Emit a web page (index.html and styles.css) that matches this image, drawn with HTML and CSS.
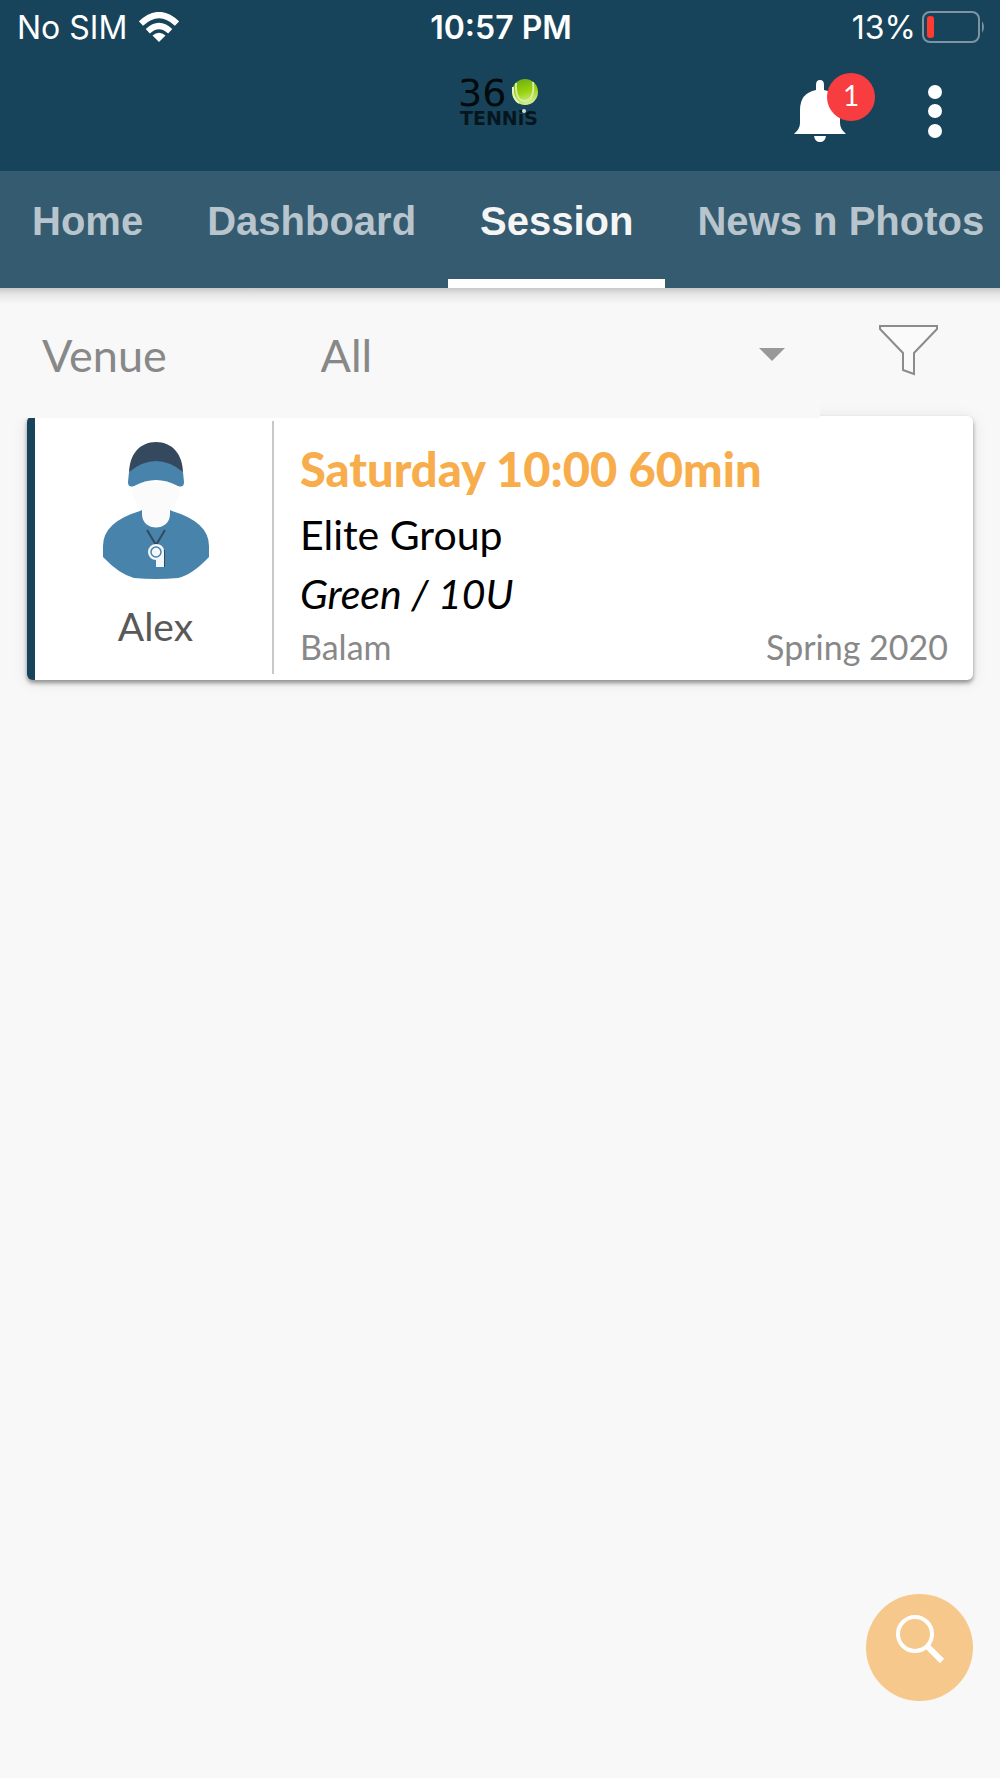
FILE: index.html
```html
<!DOCTYPE html>
<html lang="en">
<head>
<meta charset="utf-8">
<meta name="viewport" content="width=device-width, initial-scale=1">
<title>360 Tennis – Session</title>
<link rel="stylesheet" href="styles.css">
</head>
<body>
<header class="header">
  <div class="status">
    <div class="status-left">
      <span>No SIM</span>
      <svg width="40" height="30" viewBox="0 0 40 30" aria-hidden="true">
        <g fill="none" stroke="#fff" stroke-width="6">
          <path d="M2 11.500Q20-5.500 38 11.500"/>
          <path d="M8.800 19.200Q20 8.800 31.200 19.200"/>
        </g>
        <path d="M13.500 23.500Q20 18 26.500 23.500L20 30Z" fill="#fff"/>
      </svg>
    </div>
    <span class="time">10:57 PM</span>
    <div class="status-right">
      <span>13%</span>
      <svg width="63" height="34" viewBox="0 0 63 34" aria-hidden="true">
        <rect x="1" y="2" width="56" height="30" rx="7" fill="none" stroke="#7d95a3" stroke-width="2"/>
        <rect x="5" y="6" width="7" height="22" rx="3" fill="#ff3b30"/>
        <path d="M60 11Q64 17 60 23Z" fill="#7d95a3"/>
      </svg>
    </div>
  </div>
  <div class="toolbar">
    <svg class="logo" width="86" height="60" viewBox="0 0 86 60" role="img" aria-label="360 Tennis">
      <defs>
        <linearGradient id="ball" x1="0.3" y1="0" x2="0.6" y2="1">
          <stop offset="0" stop-color="#6fae12"/><stop offset="0.5" stop-color="#98d30d"/><stop offset="1" stop-color="#d9f09a"/>
        </linearGradient>
      </defs>
      <text x="1" y="34" class="logo-number">36</text>
      <circle cx="68" cy="20" r="13" fill="url(#ball)"/>
      <path d="M59 11Q58 29 68 29Q78 28 76 10" fill="none" stroke="#d5eda0" stroke-width="2"/>
      <path d="M56 15Q55 26 62 31" fill="none" stroke="#e4f4c0" stroke-width="2"/>
      <text x="3" y="53" class="logo-name">TENNiS</text>
      <circle cx="67" cy="39" r="2" fill="#cfdbe0"/>
    </svg>
    <div class="actions">
      <button class="icon-button bell" type="button" aria-label="Notifications">
        <svg width="52" height="62" viewBox="0 0 52 62" aria-hidden="true">
          <path fill="#fff" d="M22 10V5Q22 0 26 0T30 5V10Q46 13 46 30V43Q46 49 52 54V57H0V54Q6 49 6 43V30Q6 13 22 10Z"/>
          <path fill="#17445b" d="M0 54h52v3H0Z"/>
          <path fill="#fff" d="M20 56H32Q31 62 26 62T20 56Z"/>
        </svg>
        <span class="badge">1</span>
      </button>
      <button class="icon-button" type="button" aria-label="More options">
        <svg width="14" height="54" viewBox="0 0 14 54" fill="#fff" aria-hidden="true">
          <circle cx="7" cy="8" r="7"/><circle cx="7" cy="27" r="7"/><circle cx="7" cy="47" r="7"/>
        </svg>
      </button>
    </div>
  </div>
</header>
<nav class="tabs">
  <a class="tab" href="#home">Home</a>
  <a class="tab" href="#dashboard">Dashboard</a>
  <a class="tab active" href="#session" aria-current="page">Session</a>
  <a class="tab" href="#news">News n Photos</a>
</nav>
<main>
  <form class="filters">
    <div class="venue">
      <label for="venue">Venue</label>
      <span class="select-box">
        <select id="venue"><option>All</option></select>
        <svg width="26" height="13" viewBox="0 0 26 13" aria-hidden="true"><path d="M0 0H26L13 13Z" fill="#999"/></svg>
      </span>
    </div>
    <button class="icon-button funnel" type="button" aria-label="Filter">
      <svg width="60" height="52" viewBox="0 0 60 52" aria-hidden="true">
        <path d="M1 2H58V5L35 29V50L24 46V29L1 5Z" fill="#fafafa" stroke="#8c8c8c" stroke-width="2"/>
      </svg>
    </button>
  </form>
  <article class="card">
    <div class="coach">
      <svg width="108" height="138" viewBox="0 0 108 138" aria-hidden="true">
        <path d="M30 40H78Q79 58 68 69V85H40V69Q29 58 30 40Z" fill="#fbfbfc"/>
        <path d="M27 32C27 12 38 0 54 0S81 12 81 32Z" fill="#34495e"/>
        <path d="M27 30Q54 8 81 30L82 40Q82 46 76 44Q54 32 32 44Q26 46 26 40Z" fill="#4783aa"/>
        <path d="M38 69L40 68V72C40 90 68 90 68 72V68L70 69Q107 80 107 104V115Q90 133 76 136Q54 138 32 136Q17 132 1 115V104Q1 80 38 69Z" fill="#4783aa"/>
        <path d="M45 88L54 103L63 88" fill="none" stroke="#34495e" stroke-width="2"/>
        <path d="M55 108H63V125H55Z" fill="#34495e"/>
        <path d="M54 102A8 8 0 1 0 54 118V125H62V110Q62 102 54 102Z" fill="#f4f7f9"/>
        <circle cx="54" cy="110" r="5" fill="#f4f7f9" stroke="#4783aa" stroke-width="1.500"/>
      </svg>
      <span class="coach-name">Alex</span>
    </div>
    <div class="details">
      <h2>Saturday 10:00 60min</h2>
      <p class="group">Elite Group</p>
      <p class="group level">Green / 10U</p>
      <p class="meta"><span>Balam</span><span>Spring 2020</span></p>
    </div>
  </article>
</main>
<button class="search" type="button" aria-label="Search">
  <svg width="48" height="48" viewBox="0 0 48 48" fill="none" stroke="#fff" aria-hidden="true">
    <circle cx="19" cy="19" r="17" stroke-width="4"/>
    <path d="M31 31L46 46" stroke-width="6"/>
  </svg>
</button>
</body>
</html>
```
FILE: styles.css
```css
* { box-sizing: border-box; }
body {
  margin: 0;
  min-height: 100vh;
  background: #f8f8f8;
  font-family: Lato, "Liberation Sans", sans-serif;
}
h2, p { margin: 0; }
svg { display: block; flex: none; }
button { padding: 0; border: 0; background: none; font: inherit; cursor: pointer; }

.header { background: #17445b; color: #fff; }
.status {
  display: grid;
  grid-template-columns: 1fr auto 1fr;
  align-items: center;
  height: 54px;
  padding: 0 15px 0 17px;
  font: 32px/56px Inter, "Liberation Sans", sans-serif;
}
.status-left, .status-right { display: flex; align-items: center; gap: 12px; }
.status-right { justify-content: flex-end; gap: 6px; }
.status svg { margin-bottom: 2px; }
.time { font-weight: 600; }

.toolbar {
  display: grid;
  grid-template-columns: 1fr auto 1fr;
  align-items: start;
  height: 117px;
  padding: 18px 58px;
}
.logo { grid-column: 2; }
.logo-number { font: 38px "DejaVu Sans", sans-serif; fill: #020a0e; }
.logo-name { font: bold 19px "DejaVu Sans", sans-serif; fill: #06161e; }
.actions { display: flex; justify-content: flex-end; gap: 82px; padding-top: 8px; }
.icon-button { display: block; }
.actions .icon-button { height: 62px; }
.bell { position: relative; }
.badge {
  position: absolute;
  top: -7px;
  left: 33px;
  width: 48px;
  height: 48px;
  border-radius: 50%;
  background: #f73d3f;
  color: #fff;
  font: 28px/44px Lato, sans-serif;
}

.tabs {
  position: relative;
  z-index: 3;
  display: flex;
  height: 117px;
  overflow: hidden;
  background: #355b70;
}
.tab {
  flex: none;
  padding: 0 32px;
  border-bottom: 9px solid transparent;
  color: #b9c5cd;
  font: bold 40px/100px "Liberation Sans", Arial, sans-serif;
  text-decoration: none;
}
.tab.active { border-color: #fff; color: #f5f5f5; }

.filters { display: flex; justify-content: space-between; color: #888; }
.filters::before {
  content: "";
  position: absolute;
  z-index: 3;
  left: 0;
  right: 0;
  height: 16px;
  background: linear-gradient(#c9c9c9, #e6e6e6 40%, #f8f8f8);
}
.venue {
  position: relative;
  z-index: 2;
  display: grid;
  grid-template-columns: 34% 1fr;
  align-items: center;
  width: 82%;
  height: 130px;
  padding: 3px 35px 0 42px;
  background: #f8f8f8;
  font-size: 45px;
  line-height: 60px;
}
.select-box { display: flex; align-items: center; padding-left: 26px; }
select {
  flex: 1;
  min-width: 0;
  padding: 0;
  border: 0;
  appearance: none;
  background: none;
  color: inherit;
  font: inherit;
}
.funnel { margin: 36px 61px 0 0; align-self: flex-start; }

.card {
  position: relative;
  display: flex;
  margin: -2px 27px 0;
  min-height: 264px;
  border-left: 8px solid #17445b;
  border-radius: 6px;
  background: #fff;
  box-shadow: 0 3px 4px rgba(0, 0, 0, .38), 0 2px 16px rgba(0, 0, 0, .1);
}
.coach {
  display: flex;
  flex-direction: column;
  align-items: center;
  width: 239px;
  margin: 5px 0 6px;
  padding: 21px 0 0 4px;
  border-right: 2px solid #c8c8c8;
}
.coach-name { margin-top: 22px; color: #595959; font-size: 39px; line-height: 48px; }
.details { flex: 1; padding: 23px 25px 0 26px; }
h2 { color: #f8ad4c; font-size: 47px; font-weight: 900; line-height: 60px; }
.group { font-size: 41px; line-height: 59px; margin-top: 6px; }
.level { margin-top: 0; font-style: italic; }
.meta { display: flex; justify-content: space-between; color: #888; font-size: 34px; line-height: 48px; }

.search {
  position: fixed;
  right: 27px;
  bottom: 77px;
  display: grid;
  place-items: center;
  width: 107px;
  height: 107px;
  padding-bottom: 17px;
  border-radius: 50%;
  background: #f7c88b;
}
```
